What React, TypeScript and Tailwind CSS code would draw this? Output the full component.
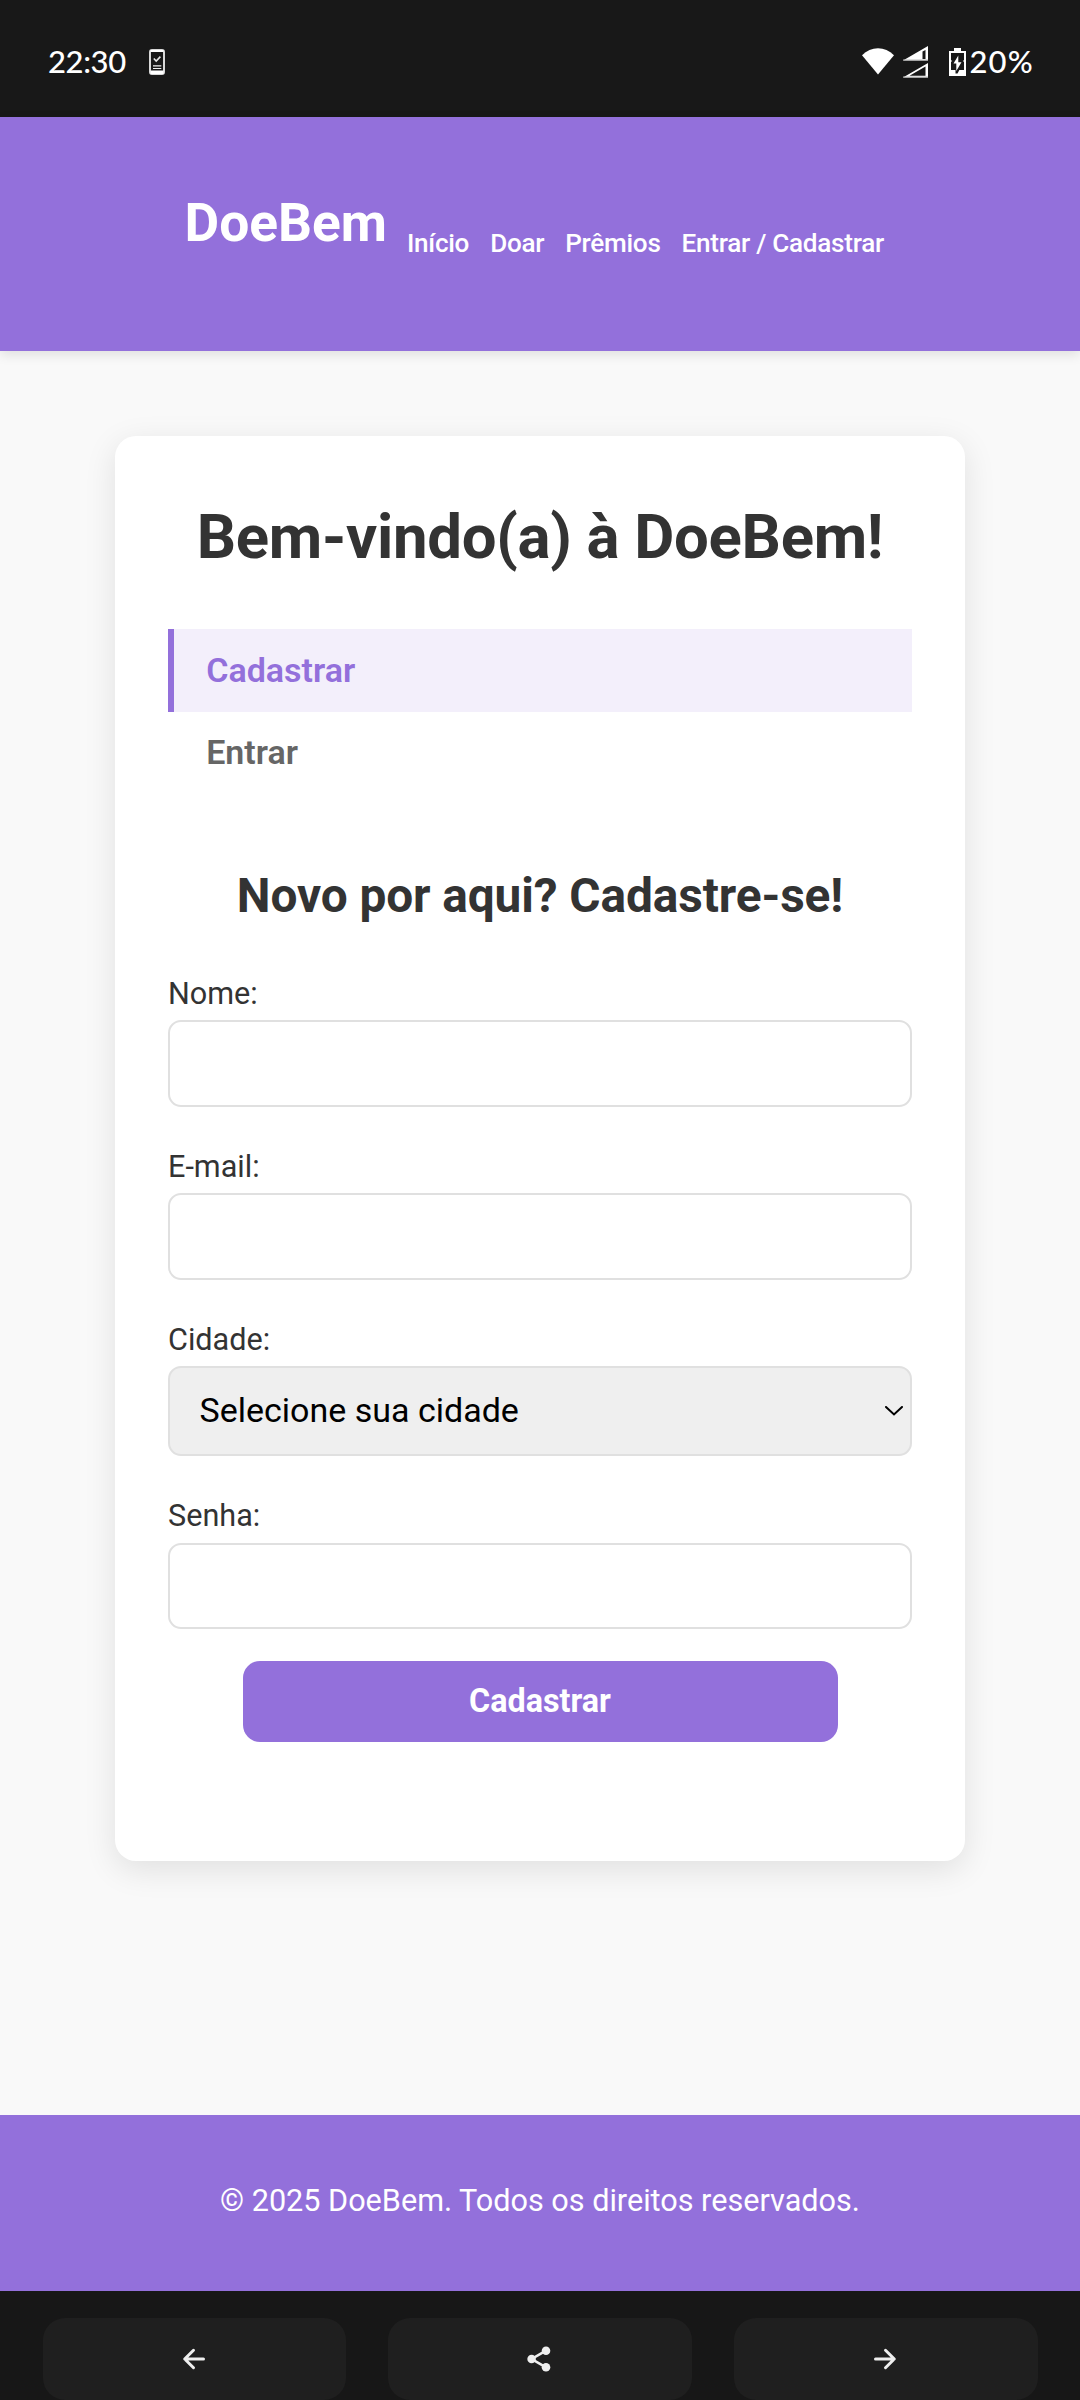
import React from 'react';

function PhoneCheckIcon() {
  return (
    <svg width="16" height="26" viewBox="0 0 16 26" fill="none">
      <rect x="1" y="1" width="14" height="24" rx="2" stroke="#d8d8d8" strokeWidth="2" />
      <path d="M1.5 1h13v2h-13zM1.5 21.500h13v3.500h-13z" fill="#fff" />
      <path d="M4.800 9.500l2.400 2.500 4.200-4.400" stroke="#e8e8e8" strokeWidth="1.6" />
      <path d="M4 16.900h8.300M4 19.500h8.300" stroke="#f0f0f0" strokeWidth="1.2" />
    </svg>
  );
}

function WifiIcon() {
  return (
    <svg width="32" height="27" viewBox="0 0 32 27" fill="#fff">
      <path d="M0 7.3C4.6 2.6 10 .3 16 .3s11.400 2.300 16 7L16 26.600z" />
    </svg>
  );
}

function SignalIcon() {
  return (
    <svg width="25" height="32" viewBox="0 0 25 32">
      <path fillRule="evenodd" fill="#fff" d="M0 14.500L25 0v14.500zM19.500 5.500v7.500h3V4z" />
      <path d="M0 14h25" stroke="#bbb" strokeWidth="1" />
      <path fillRule="evenodd" fill="#fff" d="M0 31.500L25 17v14.500zM6.500 29.800h16V20.500z" />
      <path d="M0 31h25" stroke="#bbb" strokeWidth="1" />
    </svg>
  );
}

function BatteryIcon() {
  return (
    <svg width="17" height="28" viewBox="0 0 17 28">
      <path d="M5 0h7v3h5v25H0V3h5z" fill="#fff" />
      <path d="M2 5h13v17H2z" fill="#181818" />
      <path d="M9.500 6L3 16h3.500v9.500h2L14 15h-3V6z" fill="#181818" />
      <path d="M9.300 7.500L4.500 15.500h2.800v7.500l5.200-8.700H9.300z" fill="#fff" />
      <path d="M2 12v2M15 12v2" stroke="#fff" strokeWidth="1" />
    </svg>
  );
}

function ArrowIcon({ flip = false }: { flip?: boolean }) {
  return (
    <svg
      className={flip ? 'mr-[2px] rotate-180' : 'mr-[1px]'}
      width="24"
      height="24"
      viewBox="0 0 24 24"
      fill="none"
      stroke="#efefef"
      strokeWidth="3"
      strokeLinecap="round"
      strokeLinejoin="round"
    >
      <path d="M21.500 12H3M11.500 3.300L2.700 12l8.800 8.700" />
    </svg>
  );
}

function ShareIcon() {
  return (
    <svg className="mr-[2px]" width="24" height="26" viewBox="0 0 24 26" fill="#efefef" stroke="#efefef">
      <path d="M19 4.700L4.700 13 19 21.300" fill="none" strokeWidth="2.600" />
      <circle cx="4.600" cy="13" r="4.300" stroke="none" />
      <circle cx="19" cy="4.700" r="4.300" stroke="none" />
      <circle cx="19" cy="21.300" r="4.300" stroke="none" />
    </svg>
  );
}

function Label({ children }: { children: React.ReactNode }) {
  return <label className="block h-[37px] text-[30.6px] leading-[37px]">{children}</label>;
}

const inputClass = 'mt-2 block h-[87px] w-full rounded-[13px] border-2 border-[#e0e0e0] bg-white px-[29px] text-[34px] outline-none';

export default function App() {
  return (
    <div className="flex h-[2400px] w-[1080px] flex-col overflow-hidden bg-[#f9f9f9] font-['Roboto',sans-serif] text-[#333]">
      <div className="flex h-[117px] shrink-0 items-start bg-[#181818] pl-[48px] pt-[41px] font-['Lato',sans-serif] text-[31px] leading-[40px] font-medium text-white">
        <span className="w-[101px] tracking-[-0.4px]">22:30</span>
        <span className="mt-[8px]"><PhoneCheckIcon /></span>
        <div className="ml-[697px] flex items-start">
          <span className="mt-[7px]"><WifiIcon /></span>
          <span className="mt-[5px] ml-[9px]"><SignalIcon /></span>
          <span className="mt-[7px] ml-[21px]"><BatteryIcon /></span>
          <span className="ml-[3.5px] tracking-[1.1px]">20%</span>
        </div>
      </div>

      <header className="relative flex h-[234px] shrink-0 items-start bg-[#9370db] pl-[184.5px] text-white shadow-[0_4px_11px_rgba(0,0,0,0.1)]">
        <h1 className="mt-[75px] text-[53.3px] leading-[62px] font-bold">DoeBem</h1>
        <nav className="mt-[111px] ml-[20px] flex gap-[21px] text-[26.1px] leading-[30px] font-medium tracking-[-0.27px] whitespace-nowrap">
          <a>Início</a>
          <a>Doar</a>
          <a>Prêmios</a>
          <a>Entrar / Cadastrar</a>
        </nav>
      </header>

      <main className="flex flex-1 flex-col px-[115px] pt-[85px]">
        <section className="h-[1425px] rounded-[21px] bg-white px-[53px] pt-[65px] shadow-[0_8.5px_32px_rgba(0,0,0,0.1)]">
          <h2 className="text-center text-[61.7px] leading-[72px] font-bold tracking-[-0.3px] whitespace-nowrap">Bem-vindo(a) à DoeBem!</h2>

          <div className="mt-[56px] text-[34px] font-semibold">
            <div className="h-[83px] border-l-6 border-[#9370db] bg-[#f3effb] pl-[32.2px] leading-[83px] text-[#9370db]">Cadastrar</div>
            <div className="h-[81px] border-l-6 border-transparent pl-[32.2px] leading-[81px] text-[#666]">Entrar</div>
          </div>

          <h3 className="mt-[75px] text-center text-[47.8px] leading-[56px] font-bold tracking-[-0.1px] whitespace-nowrap">Novo por aqui? Cadastre-se!</h3>

          <form className="mt-[51px]">
            <div className="mb-[41px]">
              <Label>Nome:</Label>
              <input className={inputClass} />
            </div>
            <div className="mb-[41px]">
              <Label>E-mail:</Label>
              <input className={inputClass} />
            </div>
            <div className="mb-[41px]">
              <Label>Cidade:</Label>
              <div className="mt-2 flex h-[90px] items-center justify-between rounded-[13px] border-2 border-[#e0e0e0] bg-[#efefef] pr-[7.5px] pl-[29.5px] text-[34px] text-black">
                <span className="pb-px">Selecione sua cidade</span>
                <svg width="18" height="10" viewBox="0 0 18 10" fill="none" stroke="#000" strokeWidth="2" strokeLinecap="round">
                  <path d="M1 1l8 7.500L17 1" />
                </svg>
              </div>
            </div>
            <div>
              <Label>Senha:</Label>
              <input type="password" className="mt-[9px] block h-[86px] w-full rounded-[13px] border-2 border-[#e0e0e0] bg-white px-[29px] text-[34px] outline-none" />
            </div>
            <button type="button" className="mt-[32px] ml-[75px] block h-[81px] w-[595px] rounded-[17px] bg-[#9370db] pr-px pb-px text-[32.3px] font-bold text-white">
              Cadastrar
            </button>
          </form>
        </section>
      </main>

      <footer className="h-[176px] shrink-0 bg-[#9370db] pt-[67px] text-center text-[30.6px] leading-[37px] text-white">
        © 2025 DoeBem. Todos os direitos reservados.
      </footer>

      <div className="grid h-[109px] shrink-0 grid-cols-[303px_304px_304px] gap-[42px] bg-[#171717] pt-[27px] pl-[43px]">
        <button className="flex h-[82px] items-center justify-center rounded-[22px] bg-[#1f1f1f]"><ArrowIcon /></button>
        <button className="flex h-[82px] items-center justify-center rounded-[22px] bg-[#1f1f1f]"><ShareIcon /></button>
        <button className="flex h-[82px] items-center justify-center rounded-[22px] bg-[#1f1f1f]"><ArrowIcon flip /></button>
      </div>
    </div>
  );
}
